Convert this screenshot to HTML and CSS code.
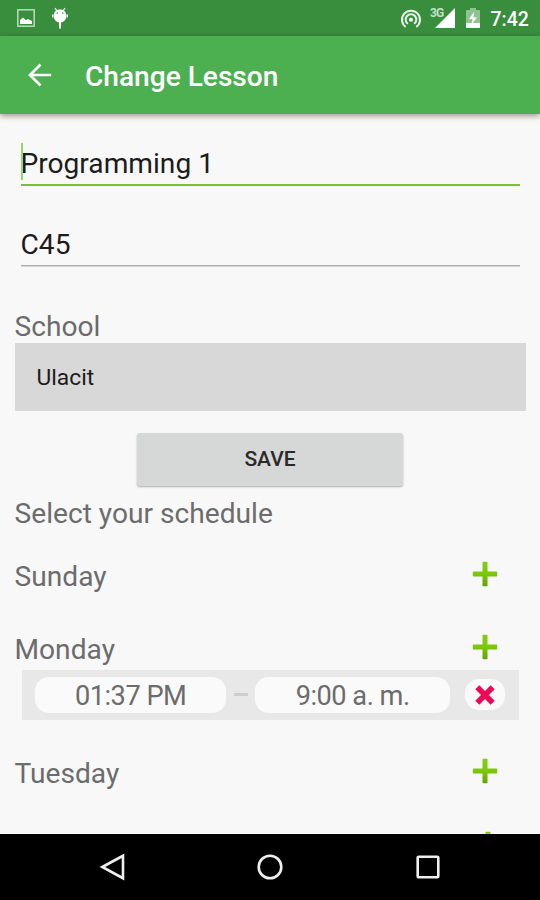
FILE: index.html
```html
<!DOCTYPE html>
<html lang="en">
<head>
<meta charset="utf-8">
<title>Change Lesson</title>
<link rel="stylesheet" href="styles.css">
</head>
<body>
<svg width="0" height="0" class="defs">
  <defs>
    <linearGradient id="green" x1="0" y1="0" x2="0" y2="1"><stop offset="0" stop-color="#86cc14"/><stop offset=".5" stop-color="#7bc90a"/><stop offset="1" stop-color="#649f08"/></linearGradient>
    <symbol id="plus" viewBox="0 0 26 26"><path fill="url(#green)" d="M11.3 .8h3.4q.8 0 .8.8v8.900h8.900q.8 0 .8.8v3.400q0 .8-.8.8h-8.900v8.900q0 .8-.8.8h-3.400q-.8 0-.8-.8v-8.900H1.600q-.8 0-.8-.8v-3.400q0-.8.8-.8h8.900V1.600q0-.8.8-.8z"/></symbol>
  </defs>
</svg>
<div class="screen">
  <header class="status">
    <svg class="picture" width="18" height="18" viewBox="0 0 18 18"><rect x=".8" y=".8" width="16.4" height="16.4" fill="none" stroke="#b9dcbb" stroke-width="1.5"/><path d="M3 15v-4l3-2.5 3 2.7 2-1.2 4 2V15z" fill="#fff"/></svg>
    <svg class="droid" width="18" height="23" viewBox="0 0 18 23"><path d="M4 1l2 3M14 1l-2 3" stroke="#fff" stroke-width="1.3"/><path d="M9 2.6c4.200 0 6.300 2.600 6.300 6.300S12.500 15.500 9 15.500 2.700 12.600 2.700 8.900 4.800 2.600 9 2.600z" fill="#fff"/><path d="M1.700 7.500v3M16.300 7.500v3" stroke="#fff" stroke-width="1.400"/><path d="M9 15v6.500" stroke="#fff" stroke-width="2"/><circle cx="6.200" cy="6" r=".8" fill="#388e3c"/><circle cx="11.800" cy="6" r=".8" fill="#388e3c"/></svg>
    <svg class="cast" width="22" height="20" viewBox="0 0 22 20" fill="none" stroke="#e7f3e7" stroke-width="2"><path d="M5.700 18A9 9 0 1 1 16.300 18"/><path d="M7.900 14.800A5.300 5.300 0 1 1 14.100 14.800"/><circle cx="11" cy="10.700" r="2" fill="#fff" stroke="none"/></svg>
    <div class="signal"><svg width="20" height="20" viewBox="0 0 20 20"><path d="M0 20L20 0v20z" fill="#fff"/></svg><span>3G</span></div>
    <svg class="battery" width="14" height="20" viewBox="0 0 14 20"><path d="M4 0h6v2h3q1 0 1 1v16q0 1-1 1H1q-1 0-1-1V3q0-1 1-1h3z" fill="#91c293"/><path d="M0 15h14v4q0 1-1 1H1q-1 0-1-1z" fill="#fff"/><path d="M8 4l-5 7h3.500L5.500 16.500 11 9.500H7.500z" fill="#fff"/></svg>
    <span class="clock">7:42</span>
  </header>
  <div class="appbar">
    <svg width="24" height="24" viewBox="0 0 24 24" fill="none" stroke="#fff" stroke-width="2.700"><path d="M23.200 12H2.500M12.500 1.500L2 12l10.500 10.500"/></svg>
    <h1>Change Lesson</h1>
  </div>
  <main>
    <div class="field active"><i class="caret"></i>Programming 1</div>
    <div class="field">C45</div>
    <div class="label">School</div>
    <div class="spinner">Ulacit</div>
    <button class="save">SAVE</button>
    <div class="label pick">Select your schedule</div>
    <div class="day sunday"><span>Sunday</span><svg width="26" height="26"><use href="#plus"/></svg></div>
    <div class="day monday"><span>Monday</span><svg width="26" height="26"><use href="#plus"/></svg></div>
    <div class="slot">
      <span class="time">01:37 PM</span><i class="dash"></i><span class="time end">9:00 a. m.</span>
      <span class="remove"><svg width="22" height="22" viewBox="0 0 20 20"><path d="M3 3l14 14M17 3L3 17" stroke="#e90b58" stroke-width="5.200"/></svg></span>
    </div>
    <div class="day tuesday"><span>Tuesday</span><svg width="26" height="26"><use href="#plus"/></svg></div>
    <div class="day next"><svg width="26" height="26"><use href="#plus"/></svg></div>
  </main>
  <nav>
    <svg width="28" height="28" viewBox="0 0 28 28"><path d="M3.300 14L24 2.800v22.400z"/></svg>
    <svg width="28" height="28" viewBox="0 0 28 28"><circle cx="14" cy="14" r="11.300"/></svg>
    <svg width="28" height="28" viewBox="0 0 28 28"><rect x="3.700" y="3.700" width="20.600" height="20.600" rx="1"/></svg>
  </nav>
</div>
</body>
</html>
```

FILE: styles.css
```css
* { box-sizing: border-box; }
body { margin: 0; font-family: Roboto, sans-serif; }
svg { display: block; flex: none; }
.defs { position: absolute; }
.screen { width: 540px; height: 900px; display: flex; flex-direction: column; overflow: hidden; background: #f8f8f8; }

.status { height: 35.5px; flex: none; display: flex; align-items: flex-start; background: #388e3c; color: #fff; }
.picture { margin: 9px 0 0 16.500px; }
.droid { margin: 7px 0 0 16px; }
.cast { margin: 8.500px 0 0 331.500px; }
.signal { position: relative; margin: 8px 0 0 13px; }
.signal span { position: absolute; left: -5px; top: -1px; font-size: 12px; line-height: 12px; font-weight: 700; letter-spacing: -1px; color: #c5dfc6; }
.battery { margin: 8px 0 0 11px; }
.clock { margin-left: 10.500px; font-size: 19.500px; line-height: 39px; font-weight: 500; }

.appbar { height: 78.500px; flex: none; display: flex; align-items: center; padding-left: 28px; gap: 33px; background: #4caf50; color: #fff; box-shadow: 0 2px 6px rgba(0, 0, 0, .4); position: relative; }
.appbar svg { margin-top: 1px; }
h1 { margin: 4px 0 0; font-size: 28.100px; line-height: 32px; font-weight: 500; }

main { flex: 1; min-height: 0; overflow: hidden; display: flex; flex-direction: column; padding: 28px 14.500px 0; font-size: 28.150px; color: #6c6c6c; }
.field { position: relative; height: 41px; flex: none; margin: 0 5.500px 0 6px; line-height: 42px; color: #1c1c1c; box-shadow: 0 1.500px #adadad; }
.field.active { height: 42px; line-height: 44px; margin-bottom: 40px; box-shadow: 0 2px #80bc30; }
.caret { position: absolute; left: 0; top: 1px; width: 2.500px; height: 37px; background: #9cd36a; }
.label { flex: none; height: 34px; line-height: 36px; margin-top: 44px; }
.spinner { height: 67.500px; flex: none; padding-left: 22px; font-size: 22.800px; line-height: 70px; background: #d8d8d8; color: #1c1c1c; }
.save { width: 266px; height: 53px; flex: none; align-self: center; margin-top: 22px; padding: 0; border: 0; border-radius: 3px; background: #d6d7d7; box-shadow: 0 1px 2px rgba(0, 0, 0, .3); font: 500 21px/53px Roboto, sans-serif; color: #2a2a2a; }
.label.pick { margin-top: 10px; }
.day { flex: none; height: 34px; display: flex; justify-content: space-between; line-height: 36px; padding-right: 28px; }
.day svg { margin-top: 2px; }
.sunday { margin-top: 29px; }
.monday { margin-top: 39px; }
.slot { height: 50px; flex: none; display: flex; align-items: flex-start; margin: 4px 7px 0; padding: 7px 13.500px 0; background: #e8e8e8; }
.time { width: 191.500px; height: 36px; border-radius: 14px; background: #fafafa; text-align: center; font-size: 27.200px; letter-spacing: -0.5px; line-height: 39px; }
.time.end { width: 195px; }
.dash { width: 14px; height: 3px; margin: 16.500px 7.500px 0; background: #cdcdcd; }
.remove { width: 40.500px; height: 31px; margin: 2px 0 0 14.500px; border-radius: 14px; background: #fafafa; display: flex; align-items: center; justify-content: center; }
.remove svg { margin-top: 1px; }
.tuesday { margin-top: 36px; }
.next { margin: 39px -3px 0 0; justify-content: flex-end; }

nav { height: 66.500px; flex: none; display: flex; justify-content: center; align-items: center; gap: 129.500px; background: #000; position: relative; }
nav svg { fill: none; stroke: #efefef; stroke-width: 2.600px; }
```
